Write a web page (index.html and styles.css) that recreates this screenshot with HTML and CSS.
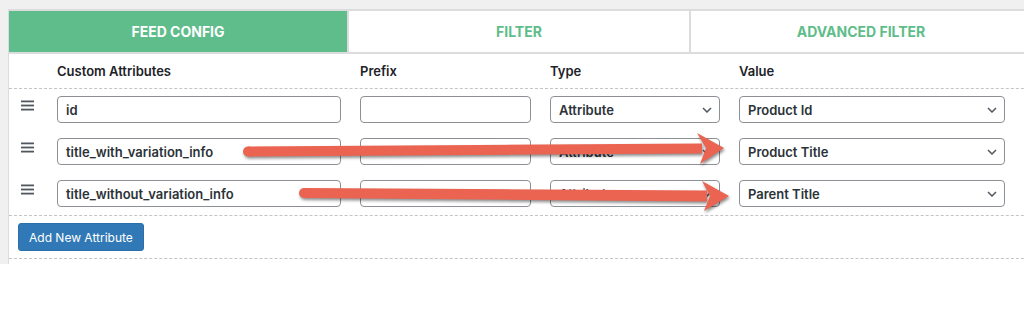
FILE: index.html
```html
<!DOCTYPE html>
<html lang="en">
<head>
    <meta charset="UTF-8">
    <title>Feed Config</title>
    <link rel="stylesheet" href="styles.css">
</head>
<body>

<div class="page">
    <div class="panel">

        <!-- Faner -->
        <div class="tabs">
            <div class="tab active">FEED CONFIG</div>
            <div class="tab">FILTER</div>
            <div class="tab">ADVANCED FILTER</div>
        </div>

        <!-- Kolonneoverskrifter -->
        <div class="grid head">
            <span></span>
            <span>Custom Attributes</span>
            <span>Prefix</span>
            <span>Type</span>
            <span>Value</span>
            <span>Suffix</span>
        </div>

        <!-- Attributrækker -->
        <div class="rows">
            <div class="grid row">
                <span class="handle"><svg width="13" height="11" viewBox="0 0 13 11"><rect y="0.5" width="13" height="1.8"/><rect y="4.6" width="13" height="1.8"/><rect y="8.7" width="13" height="1.8"/></svg></span>
                <div class="field">id</div>
                <div class="field"></div>
                <div class="field select">Attribute<svg class="chev" width="10" height="6" viewBox="0 0 10 6"><path d="M1 1l4 4 4-4"/></svg></div>
                <div class="field select">Product Id<svg class="chev" width="10" height="6" viewBox="0 0 10 6"><path d="M1 1l4 4 4-4"/></svg></div>
                <div class="field"></div>
            </div>
            <div class="grid row">
                <span class="handle"><svg width="13" height="11" viewBox="0 0 13 11"><rect y="0.5" width="13" height="1.8"/><rect y="4.6" width="13" height="1.8"/><rect y="8.7" width="13" height="1.8"/></svg></span>
                <div class="field">title_with_variation_info</div>
                <div class="field"></div>
                <div class="field select">Attribute<svg class="chev" width="10" height="6" viewBox="0 0 10 6"><path d="M1 1l4 4 4-4"/></svg></div>
                <div class="field select">Product Title<svg class="chev" width="10" height="6" viewBox="0 0 10 6"><path d="M1 1l4 4 4-4"/></svg></div>
                <div class="field"></div>
            </div>
            <div class="grid row">
                <span class="handle"><svg width="13" height="11" viewBox="0 0 13 11"><rect y="0.5" width="13" height="1.8"/><rect y="4.6" width="13" height="1.8"/><rect y="8.7" width="13" height="1.8"/></svg></span>
                <div class="field">title_without_variation_info</div>
                <div class="field"></div>
                <div class="field select">Attribute<svg class="chev" width="10" height="6" viewBox="0 0 10 6"><path d="M1 1l4 4 4-4"/></svg></div>
                <div class="field select">Parent Title<svg class="chev" width="10" height="6" viewBox="0 0 10 6"><path d="M1 1l4 4 4-4"/></svg></div>
                <div class="field"></div>
            </div>
        </div>

        <div class="actions">
            <button type="button">Add New Attribute</button>
        </div>

    </div>
</div>

<!-- Røde pile lagt oven på skærmbilledet -->
<svg class="arrows" width="1024" height="334" viewBox="0 0 1024 334">
    <g class="arrow">
        <path d="M248 146.5 L702 143.5 L702 153.5 L248 156.5 Z"/>
        <circle cx="248" cy="151.5" r="5"/>
        <path d="M697 133 L724 148 L700 164 L706 148 Z"/>
    </g>
    <g class="arrow">
        <path d="M304 188 L707 190.5 L707 201.5 L304 198 Z"/>
        <circle cx="304" cy="193" r="5"/>
        <path d="M702 181 L729 196 L704 211 L710 196 Z"/>
    </g>
</svg>

</body>
</html>
```

FILE: styles.css
```css
/* Generel styling */
body {
    margin: 0;
    background-color: #fff;
    font-family: Inter, "Liberation Sans", Arial, sans-serif;
    font-size: 13px;
    color: #1d2327;
    position: relative;
    height: 334px;
    overflow: hidden;
}

.page {
    background-color: #f0f0f1; /* Lysegrå baggrund */
    height: 264px;
    padding: 9px 0 0 8px;
    box-sizing: border-box;
    overflow: hidden;
}

.panel {
    background-color: #fff;
    border-left: 1px solid #dcdcde;
    width: 1100px;
    height: 255px;
}

/* Faner */
.tabs {
    display: flex;
}

.tab {
    width: 342px;
    height: 45px;
    box-sizing: border-box;
    border: 2px solid #dcdcde;
    border-left-width: 1px;
    border-right-width: 1px;
    display: flex;
    justify-content: center;
    align-items: center;
    font-size: 14px;
    font-weight: 700;
    color: #5ebd8a;
    background-color: #fff;
}

.tab.active {
    width: 339px;
    border-left: 0;
    background-color: #5ebd8a; /* Grøn aktiv fane */
    color: #fff;
}

/* Kolonner */
.grid {
    display: grid;
    grid-template-columns: 29px 284px 171px 170px 266px 80px;
    column-gap: 19px;
}

.head {
    height: 34px;
    align-items: center;
    font-weight: 600;
    border-bottom: 1px dashed #c3c4c7;
    white-space: nowrap;
}

.rows {
    padding: 7px 0 8px;
    display: flex;
    flex-direction: column;
    gap: 15px;
    border-bottom: 1px dashed #c3c4c7;
}

.handle {
    padding: 4px 0 0 12px;
}

.handle svg {
    display: block;
    fill: #50575e;
}

.field {
    height: 27px;
    box-sizing: border-box;
    border: 1px solid #8c8f94;
    border-radius: 4px;
    padding: 0 8px;
    display: flex;
    align-items: center;
    font-weight: 600;
    color: #2c3338;
    white-space: nowrap;
}

.select {
    justify-content: space-between;
    padding-right: 7px;
}

.chev {
    fill: none;
    stroke: #50575e;
    stroke-width: 1.5;
}

/* Knap */
.actions {
    padding: 7px 9px;
    border-bottom: 1px dashed #c3c4c7;
}

.actions button {
    height: 28px;
    padding: 0 10px;
    border: 1px solid #2c6fa8;
    border-radius: 3px;
    background-color: #3179b6;
    color: #fff;
    font-family: inherit;
    font-size: 12px;
    display: block;
}

/* Pile */
.arrows {
    position: absolute;
    left: 0;
    top: 0;
    pointer-events: none;
}

.arrow {
    fill: #eb6351;
    filter: drop-shadow(1px 2px 1.5px rgba(0, 0, 0, 0.45));
}
```
